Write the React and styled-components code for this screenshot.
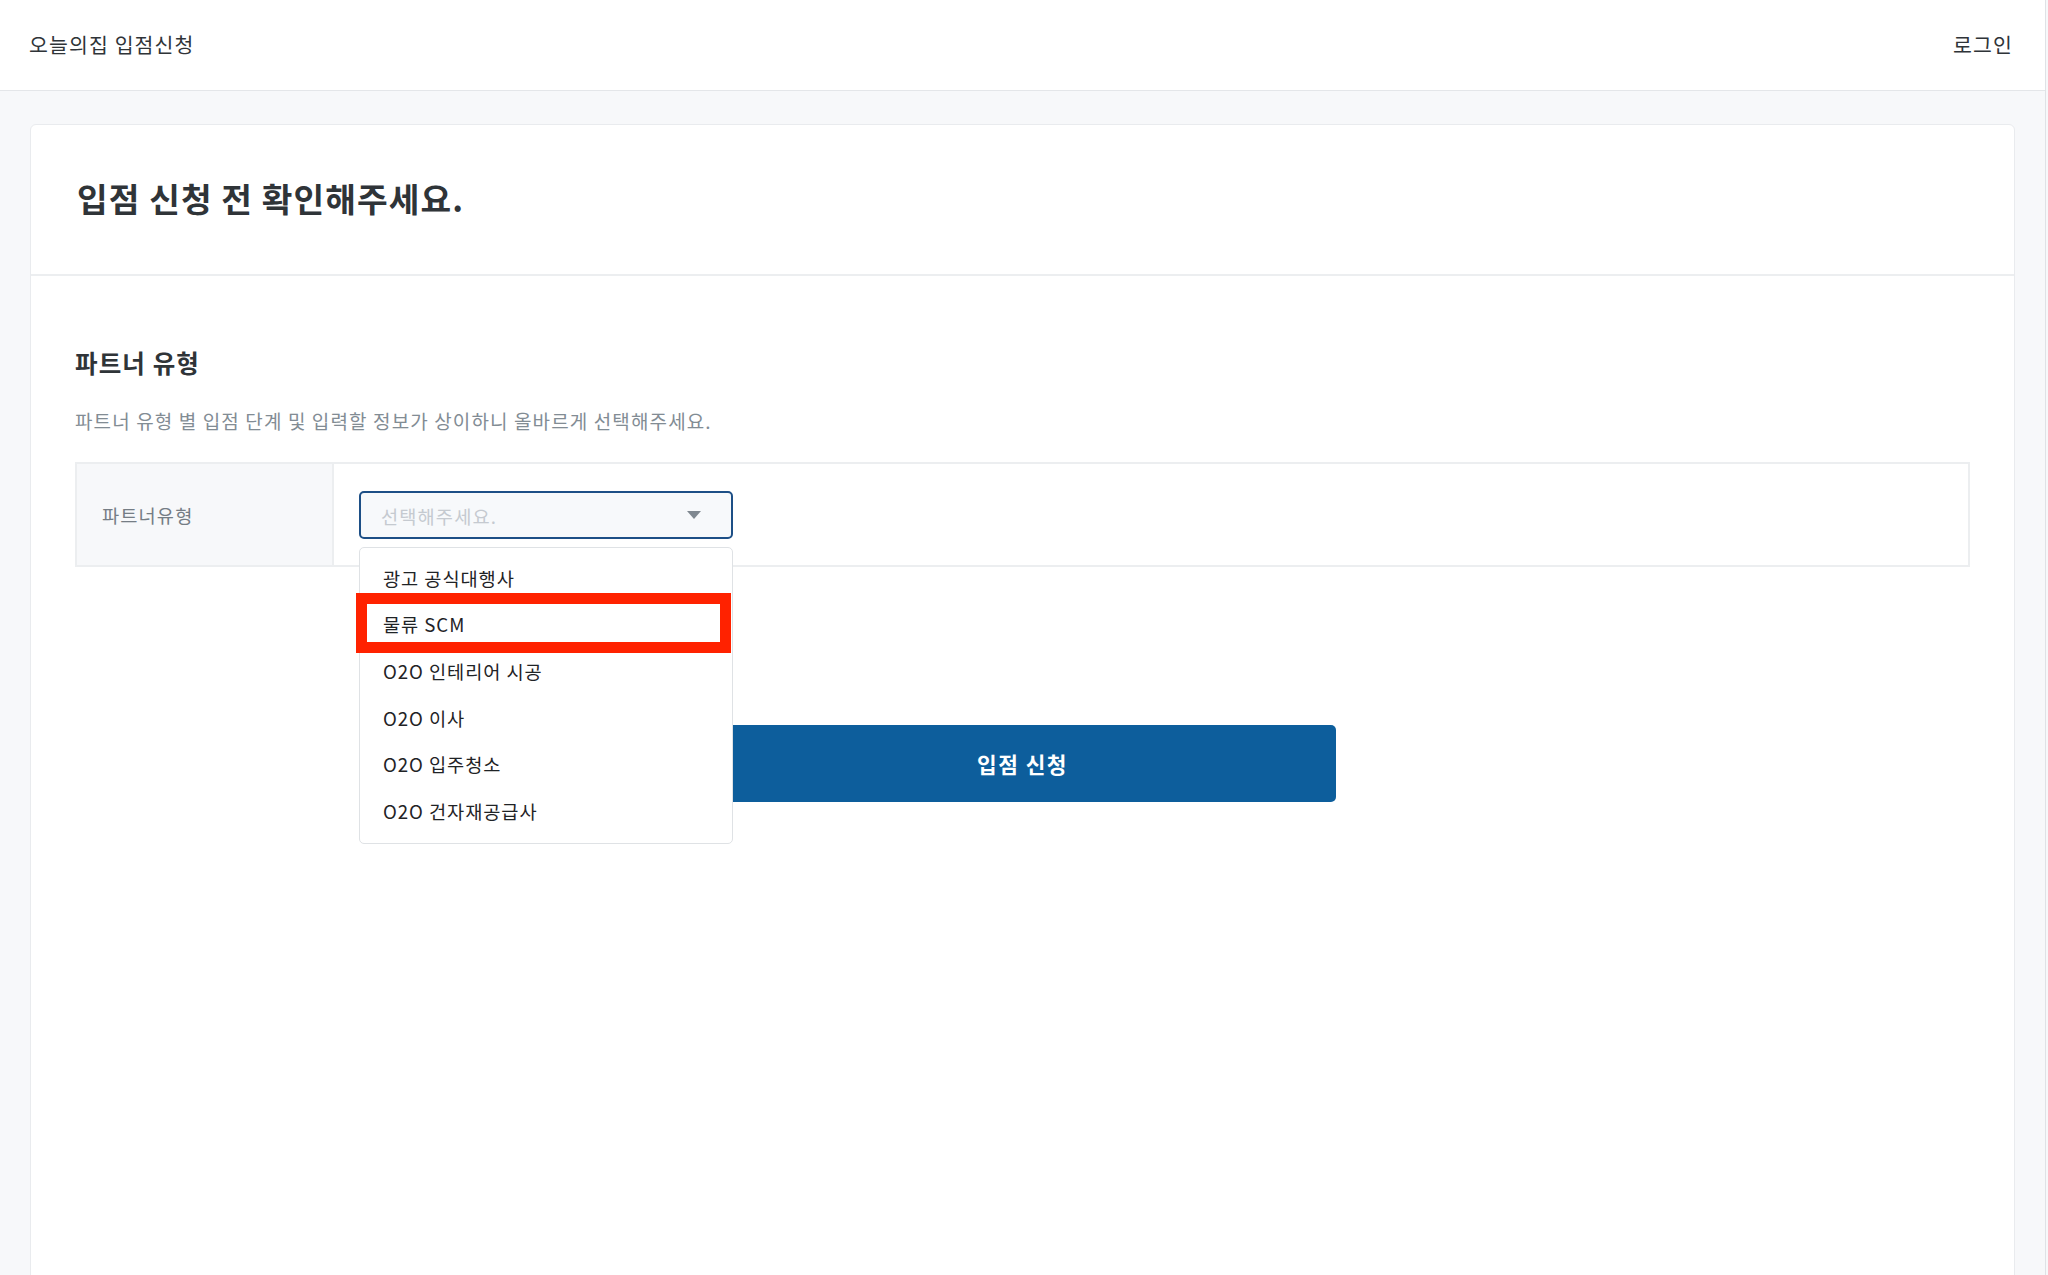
import React from 'react';
import styled, { createGlobalStyle } from 'styled-components';

const GlobalStyle = createGlobalStyle`
  * {
    box-sizing: border-box;
  }

  html, body {
    margin: 0;
    padding: 0;
    background: #f7f8fa;
  }

  body {
    font-family: "Noto Sans CJK KR", "Noto Sans", "Liberation Sans", sans-serif;
    color: #2f3438;
    letter-spacing: 0.07em;
    overflow: hidden;
  }
`;

const Page = styled.div`
  width: 2046px;
  min-height: 1275px;
  border-right: 1px solid #dfe2e6;
  background: #f7f8fa;
`;

const Header = styled.header`
  display: flex;
  align-items: center;
  justify-content: space-between;
  height: 91px;
  padding: 0 32px 0 29px;
  background: #fff;
  border-bottom: 1px solid #e4e6e9;
`;

const HeaderLink = styled.span`
  margin-top: -2px;
  font-size: 20.5px;
  font-weight: 400;
  color: #2f3438;
`;

const Main = styled.main`
  padding: 33px 30px 0;
`;

const Card = styled.section`
  min-height: 1160px;
  background: #fff;
  border: 1px solid #e9ebee;
  border-radius: 6px;
`;

const CardHead = styled.div`
  display: flex;
  align-items: center;
  height: 151px;
  padding: 0 46px 4px;
  border-bottom: 2px solid #eceef0;
`;

const Title = styled.h1`
  margin: 0;
  font-size: 33.3px;
  font-weight: 700;
  color: #2f3438;
`;

const CardBody = styled.div`
  display: flex;
  flex-direction: column;
  padding: 70px 44px 0;
`;

const SectionTitle = styled.h2`
  margin: 0;
  font-size: 24.5px;
  line-height: 34px;
  font-weight: 700;
  color: #2f3438;
`;

const Description = styled.p`
  margin: 27px 0 0;
  font-size: 19px;
  line-height: 28px;
  color: #828c94;
`;

const Table = styled.div`
  display: flex;
  height: 105px;
  margin-top: 27px;
  border: 2px solid #eceef0;
`;

const LabelCell = styled.div`
  display: flex;
  align-items: center;
  width: 257px;
  padding-left: 25px;
  background: #f7f8fa;
  border-right: 2px solid #eceef0;
  font-size: 18.67px;
  color: #757d85;
`;

const ValueCell = styled.div`
  flex: 1;
  padding: 27px 0 0 25px;
`;

const SelectWrap = styled.div`
  position: relative;
  width: 374px;
`;

const SelectBox = styled.div`
  display: flex;
  align-items: center;
  justify-content: space-between;
  height: 48px;
  padding: 0 30px 0 20px;
  background: #f7f9fb;
  border: 2px solid #1d4f86;
  border-radius: 5px;
  font-size: 18.67px;
  color: #c5cad0;
`;

const Caret = styled.span`
  width: 0;
  height: 0;
  border-left: 7px solid transparent;
  border-right: 7px solid transparent;
  border-top: 8px solid #7f8890;
`;

const Menu = styled.ul`
  position: absolute;
  top: 56px;
  left: 0;
  z-index: 5;
  width: 374px;
  margin: 0;
  padding: 6px 0 9px;
  list-style: none;
  background: #fff;
  border: 1.5px solid #dfe2e5;
  border-radius: 5px;
`;

const MenuItem = styled.li`
  position: relative;
  display: flex;
  align-items: center;
  height: 46.67px;
  padding-left: 23px;
  font-size: 18.67px;
  color: #1f2326;
  letter-spacing: 0.05em;

  ${({ $marked }) =>
    $marked &&
    `
    &::after {
      content: '';
      position: absolute;
      top: -8px;
      bottom: -6px;
      left: -4px;
      right: 1px;
      border: 11px solid #ff2200;
    }
  `}
`;

const Actions = styled.div`
  display: flex;
  justify-content: center;
  margin-top: 158px;
`;

const SubmitButton = styled.button`
  width: 626px;
  height: 77px;
  border: none;
  border-radius: 5px;
  background: #0d5e9c;
  color: #fff;
  font-family: inherit;
  font-size: 21.33px;
  font-weight: 700;
  letter-spacing: 0.07em;
  cursor: pointer;
`;

const partnerTypes = [
  '광고 공식대행사',
  '물류 SCM',
  'O2O 인테리어 시공',
  'O2O 이사',
  'O2O 입주청소',
  'O2O 건자재공급사'
];

const App = () => (
  <Page>
    <GlobalStyle />
    <Header>
      <HeaderLink>오늘의집 입점신청</HeaderLink>
      <HeaderLink>로그인</HeaderLink>
    </Header>

    <Main>
      <Card>
        <CardHead>
          <Title>입점 신청 전 확인해주세요.</Title>
        </CardHead>

        <CardBody>
          <SectionTitle>파트너 유형</SectionTitle>
          <Description>
            파트너 유형 별 입점 단계 및 입력할 정보가 상이하니 올바르게 선택해주세요.
          </Description>

          <Table>
            <LabelCell>파트너유형</LabelCell>
            <ValueCell>
              <SelectWrap>
                <SelectBox>
                  <span>선택해주세요.</span>
                  <Caret />
                </SelectBox>
                <Menu>
                  {partnerTypes.map((type, i) => (
                    <MenuItem key={type} $marked={i === 1}>
                      {type}
                    </MenuItem>
                  ))}
                </Menu>
              </SelectWrap>
            </ValueCell>
          </Table>

          <Actions>
            <SubmitButton>입점 신청</SubmitButton>
          </Actions>
        </CardBody>
      </Card>
    </Main>
  </Page>
);

export default App;
